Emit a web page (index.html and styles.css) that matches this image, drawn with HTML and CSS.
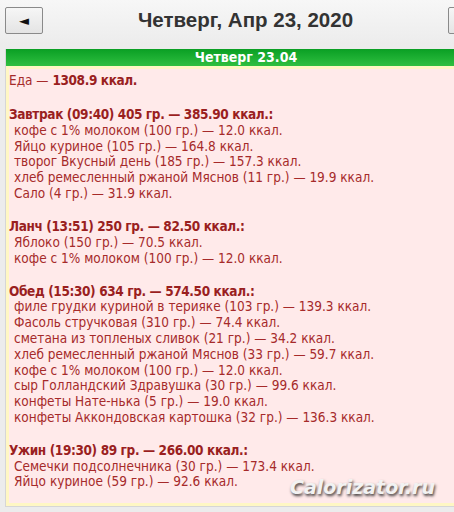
FILE: index.html
```html
<!DOCTYPE html>
<html lang="ru">
<head>
<meta charset="utf-8">
<title>Дневник</title>
<link rel="stylesheet" href="styles.css">
</head>
<body>
<div class="page">
  <div class="topbar">
    <div class="btn"><span class="arrow">◄</span></div>
    <div class="title">Четверг, Апр 23, 2020</div>
    <div class="btn"></div>
  </div>
  <div class="box">
    <div class="head">Четверг 23.04</div>
    <div class="content">
      <div class="total">Еда — <b>1308.9 ккал.</b></div>
      <div class="meal">
        <div class="mh">Завтрак (09:40) 405 гр. — 385.90 ккал.:</div>
        <div class="it">кофе с 1% молоком (100 гр.) — 12.0 ккал.</div>
        <div class="it">Яйцо куриное (105 гр.) — 164.8 ккал.</div>
        <div class="it">творог Вкусный день (185 гр.) — 157.3 ккал.</div>
        <div class="it">хлеб ремесленный ржаной Мяснов (11 гр.) — 19.9 ккал.</div>
        <div class="it">Сало (4 гр.) — 31.9 ккал.</div>
      </div>
      <div class="meal">
        <div class="mh">Ланч (13:51) 250 гр. — 82.50 ккал.:</div>
        <div class="it">Яблоко (150 гр.) — 70.5 ккал.</div>
        <div class="it">кофе с 1% молоком (100 гр.) — 12.0 ккал.</div>
      </div>
      <div class="meal">
        <div class="mh">Обед (15:30) 634 гр. — 574.50 ккал.:</div>
        <div class="it">филе грудки куриной в терияке (103 гр.) — 139.3 ккал.</div>
        <div class="it">Фасоль стручковая (310 гр.) — 74.4 ккал.</div>
        <div class="it">сметана из топленых сливок (21 гр.) — 34.2 ккал.</div>
        <div class="it">хлеб ремесленный ржаной Мяснов (33 гр.) — 59.7 ккал.</div>
        <div class="it">кофе с 1% молоком (100 гр.) — 12.0 ккал.</div>
        <div class="it">сыр Голландский Здравушка (30 гр.) — 99.6 ккал.</div>
        <div class="it">конфеты Нате-нька (5 гр.) — 19.0 ккал.</div>
        <div class="it">конфеты Аккондовская картошка (32 гр.) — 136.3 ккал.</div>
      </div>
      <div class="meal">
        <div class="mh">Ужин (19:30) 89 гр. — 266.00 ккал.:</div>
        <div class="it">Семечки подсолнечника (30 гр.) — 173.4 ккал.</div>
        <div class="it">Яйцо куриное (59 гр.) — 92.6 ккал.</div>
      </div>
    </div>
  </div>
  <div class="watermark">Calorizator.ru</div>
</div>
</body>
</html>
```
FILE: styles.css
```css
html, body {
  margin: 0;
  padding: 0;
  overflow: hidden;
  height: 512px;
}
body {
  background: linear-gradient(#f7f7f7 0px, #ececec 45px, #ececec 100%);
  font-family: "DejaVu Sans Condensed", "DejaVu Sans", sans-serif;
}
.page {
  position: relative;
  width: 491px;
  height: 512px;
}
.topbar {
  display: flex;
  align-items: flex-start;
  padding: 7px 5px 0 5px;
  height: 49px;
  box-sizing: border-box;
}
.btn {
  width: 38px;
  height: 27px;
  box-sizing: border-box;
  border: 1px solid #8a8a8a;
  border-radius: 2px;
  background: linear-gradient(#f6f6f6, #e4e4e4);
  display: flex;
  align-items: center;
  justify-content: center;
  flex: none;
}
.arrow {
  font-family: "DejaVu Sans", sans-serif;
  font-size: 13px;
  color: #111;
  line-height: 1;
}
.title {
  flex: 1;
  text-align: center;
  font-family: "Liberation Sans", Arial, sans-serif;
  font-weight: bold;
  font-size: 20.5px;
  line-height: 26px;
  color: #333;
}
.box {
  margin: 0 5px;
  border-left: 1px solid #d6d6d6;
  border-bottom: 1px solid #d6d6d6;
  height: 458px;
  box-sizing: border-box;
}
.head {
  height: 17px;
  background: linear-gradient(#0a9f24, #2fbf40);
  color: #fff;
  font-weight: bold;
  font-size: 14px;
  line-height: 17px;
  text-align: center;
}
.content {
  background: #ffeaea;
  border: 3px solid #fff7c4;
  border-right: none;
  height: 440px;
  box-sizing: border-box;
  padding: 4px 0 0 0;
  font-size: 13.5px;
  line-height: 15.8px;
  color: #a62a2a;
}
.content b, .mh {
  font-weight: bold;
  color: #9a1f1f;
  letter-spacing: -0.38px;
}
.meal {
  margin-top: 17.2px;
}
.total + .meal {
  margin-top: 18.2px;
}
.it {
  padding-left: 5px;
}
.watermark {
  position: absolute;
  left: 290px;
  top: 476px;
  font-family: "DejaVu Sans", sans-serif;
  font-style: italic;
  font-weight: bold;
  font-size: 19px;
  color: #f2f2f2;
  text-shadow: 1px 2px 3px rgba(0,0,0,0.75);
}
```
